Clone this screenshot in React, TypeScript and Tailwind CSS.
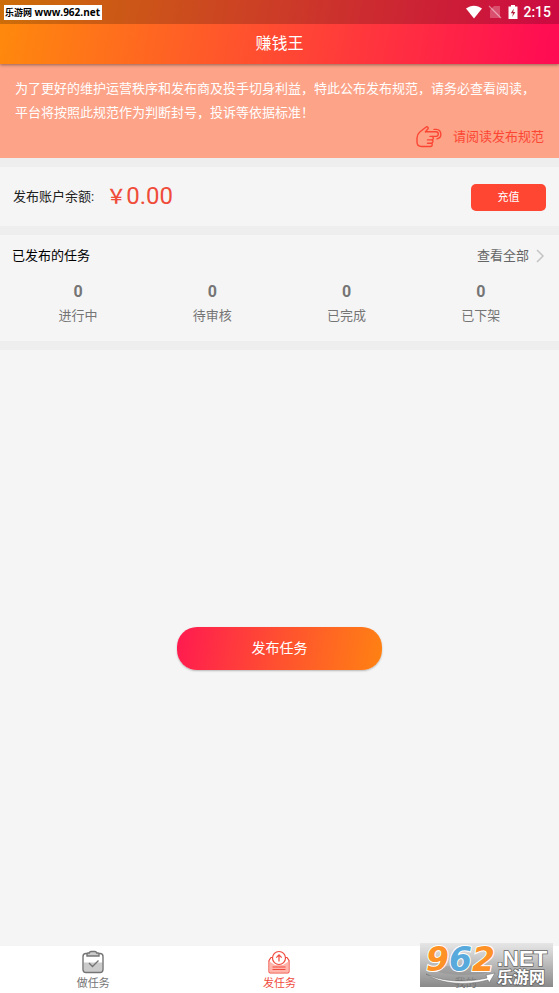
import type { ReactNode } from "react";

// ─────────────────────────────────────────────────────────────
// Publisher home screen: notice, balance, published task counters,
// publish button and the bottom tab bar.
// ─────────────────────────────────────────────────────────────

const STATS = [
  { label: "进行中", count: 0 },
  { label: "待审核", count: 0 },
  { label: "已完成", count: 0 },
  { label: "已下架", count: 0 },
];

function StatusBar() {
  return (
    <div className="flex h-6 items-center justify-between bg-black/20 pr-2 pl-1 text-white">
      <span className="bg-white pr-0.5 pl-px font-['Open_Sans','Noto_Sans_CJK_SC',sans-serif] text-[10px] leading-[14px] font-bold text-black">
        <span className="text-[9px]">乐游网</span> www.962.net
      </span>
      <div className="flex items-center">
        <svg className="mr-1 h-4 w-[18px]" viewBox="0 0 18 16" fill="currentColor" aria-hidden="true">
          <path d="M1 4.6C5.6.7 12.4.7 17 4.6L9 14.5Z" />
        </svg>
        <svg className="mr-1 h-4 w-4" viewBox="0 0 16 16" aria-hidden="true">
          <path d="M7 2h6v12H3V6Z" fill="currentColor" opacity=".25" />
          <path d="m2 2 12 12" stroke="currentColor" strokeWidth="1.3" opacity=".45" />
        </svg>
        <svg className="mr-1 h-4 w-3" viewBox="0 0 12 16" aria-hidden="true">
          <path d="M4 1h4v1.5h2.5V15h-9V2.5H4Z" fill="currentColor" />
          <path d="M6.8 4.5 3.8 9.3H6L5.2 13l3.1-4.9H6.2Z" fill="#b21f3c" />
        </svg>
        <span className="font-[Roboto,sans-serif] text-sm font-medium">2:15</span>
      </div>
    </div>
  );
}

function PointingHand() {
  return (
    <svg
      className="h-6 w-7"
      viewBox="0 0 28 24"
      fill="none"
      stroke="currentColor"
      strokeWidth="1.4"
      strokeLinecap="round"
      strokeLinejoin="round"
      aria-hidden="true"
    >
      <path d="M10.5 6.8h10.5a2.3 2.3 0 0 1 0 4.6H15" />
      <path d="M19 4.4h2.2a4.8 4.8 0 0 1 .8 9.5" />
      <path d="M10.5 6.8 13 3.8c.8-1.5-.8-2.6-2.2-1.6L4.8 7C2.8 8.7 2 10.5 2 13v4c0 3 1.8 4.5 4.5 4.5h9c2 0 2.3-2.6.8-3.3 1.9-.1 2.3-2.7.7-3.3 1.7-.4 1.8-2.9.2-3.5" />
      <path d="M12.5 14.9H17M12.5 18.2h3.8" />
    </svg>
  );
}

function ClipboardIcon() {
  return (
    <svg className="h-6 w-6" viewBox="0 0 24 24" fill="none" stroke="currentColor" strokeWidth="1.4" aria-hidden="true">
      <path d="M2.5 12.5h19V19a3 3 0 0 1-3 3h-13a3 3 0 0 1-3-3Z" fill="#cbcbcb" stroke="none" />
      <rect x="2" y="3.5" width="20" height="19" rx="3" />
      <path d="M6 6V4.2c0-.9.5-1.2 1.3-1.2h1c.3-1 .8-1.5 1.7-1.5h4c.9 0 1.4.5 1.7 1.5h1c.8 0 1.3.3 1.3 1.2V6Z" fill="#cbcbcb" />
      <path d="m8 13 3.5 3.5 6-6" />
    </svg>
  );
}

function UploadTrayIcon() {
  return (
    <svg className="h-6 w-6" viewBox="0 0 24 24" fill="none" stroke="currentColor" strokeWidth="1.2" aria-hidden="true">
      <path d="M6 7.5H4L2 10.5v11c0 .8.5 1.3 1.3 1.3h17.4c.8 0 1.3-.5 1.3-1.3v-11l-2-3h-2" fill="#fff" />
      <path d="M2.5 11.5 8 15h8l5.5-3.5v11h-19Z" fill="#ffb5ab" stroke="none" />
      <circle cx="12" cy="8" r="6.5" fill="#fff" />
      <path d="M12 11.5V5M9.3 7.6 12 4.9l2.7 2.7M5.5 17h13M5.5 19.5h13" />
    </svg>
  );
}

// Site badge that floats over the right end of the tab bar
function Watermark() {
  return (
    <svg
      className="absolute right-[6px] bottom-[6px] h-11 w-[133px] overflow-visible"
      viewBox="0 0 133 44"
      role="img"
      aria-label="962.NET 乐游网"
    >
      <defs>
        <linearGradient id="plate" x1="0" y1="0" x2="0" y2="1">
          <stop offset="0" stopColor="#e2e2e2" />
          <stop offset="1" stopColor="#6c6c6c" />
        </linearGradient>
      </defs>
      <rect width="133" height="44" fill="url(#plate)" opacity=".8" />
      <ellipse cx="44" cy="27" rx="27" ry="5" fill="#777" opacity=".25" />
      <g
        fontFamily="DejaVu Sans, sans-serif"
        fontWeight="bold"
        fontStyle="italic"
        fontSize="33"
        stroke="#fff"
        strokeWidth="2"
        paintOrder="stroke"
      >
        <text x="6" y="28">
          <tspan fill="#ff9226">9</tspan>
          <tspan fill="#58a9dc">6</tspan>
          <tspan fill="#ff9226">2</tspan>
        </text>
      </g>
      <path d="M6 31c16 8 40 9 61 4l-1-3 9-2-6 10-1-3C46 43 20 41 6 31Z" fill="#fff" stroke="#666" strokeWidth=".5" />
      <g fill="#fff" stroke="#666" strokeWidth="1.5" paintOrder="stroke" fontWeight="bold">
        <text x="77" y="23" fontSize="22" fontFamily="Liberation Sans, sans-serif">.NET</text>
        <text x="77" y="40" fontSize="16" fontFamily="Noto Sans CJK SC, sans-serif">乐游网</text>
      </g>
    </svg>
  );
}

function Tab({ label, icon, active }: { label: string; icon?: ReactNode; active?: boolean }) {
  return (
    <a
      href="#"
      aria-current={active ? "page" : undefined}
      className={`flex flex-1 flex-col items-center justify-end gap-0.5 pt-1 pb-px text-[11px] leading-4 ${active ? "text-[#f04a3c]" : "text-[#757575]"}`}
    >
      {icon}
      {label}
    </a>
  );
}

export default function App() {
  return (
    <div className="flex min-h-screen flex-col bg-[#f5f5f5] font-[Roboto,'Noto_Sans_CJK_SC',sans-serif] text-[13px] text-[#757575]">
      <header className="relative bg-linear-[100deg,#ff8a0c,#ff4a32_50%,#ff0a54] shadow-[0_1px_3px_rgba(0,0,0,0.4)]">
        <StatusBar />
        <h1 className="py-2 text-center text-base leading-6 text-white">赚钱王</h1>
      </header>

      <section className="bg-[#fca388] px-[15px] pt-[13px] pb-[9px] text-white">
        <p className="leading-6">
          为了更好的维护运营秩序和发布商及投手切身利益，特此公布发布规范，请务必查看阅读，平台将按照此规范作为判断封号，投诉等依据标准！
        </p>
        <a href="#" className="flex items-center justify-end gap-2.5 leading-6 text-[#fc4634]">
          <PointingHand />
          请阅读发布规范
        </a>
      </section>

      <main className="flex flex-1 flex-col">
        <section className="flex items-center border-y-9 border-[#eeeeee] px-[13px] pt-4 pb-[15px]">
          <span className="text-[#212121]">发布账户余额:</span>
          <span className="ml-3 text-2xl leading-[27px] text-[#f04c3a]">
            <span className="text-xl leading-[27px] font-medium">￥</span>0.00
          </span>
          <button type="button" className="ml-auto h-[27px] w-[75px] rounded-[5px] bg-[#ff4633] pt-0.5 text-[11px] text-white">
            充值
          </button>
        </section>

        <section className="border-b-9 border-[#eeeeee] pt-[11px] pb-[13px]">
          <div className="flex items-center justify-between px-3 leading-5">
            <h2 className="text-black">已发布的任务</h2>
            <a href="#" className="flex items-center gap-1.5 text-[#666]">
              查看全部
              <svg className="h-4 w-3" viewBox="0 0 12 16" fill="none" stroke="#c4c4c4" strokeWidth="1.5" aria-hidden="true">
                <path d="m2 2 6 6-6 6" />
              </svg>
            </a>
          </div>
          <ul className="mt-3.5 flex px-[11px] text-center">
            {STATS.map((s) => (
              <li key={s.label} className="flex-1">
                <p className="text-base leading-6 font-bold">{s.count}</p>
                <p className="leading-6">{s.label}</p>
              </li>
            ))}
          </ul>
        </section>

        <div className="flex flex-1 items-center justify-center">
          <button
            type="button"
            className="h-[43px] w-[205px] rounded-[20px] bg-linear-[100deg,#ff1a50,#ff5030_50%,#ff8212] text-sm text-white shadow-[0_1px_2px_rgba(0,0,0,0.25)]"
          >
            发布任务
          </button>
        </div>
      </main>

      <nav className="relative flex bg-white">
        <Tab label="做任务" icon={<ClipboardIcon />} />
        <Tab label="发任务" icon={<UploadTrayIcon />} active />
        <Tab label="我的" />
        <Watermark />
      </nav>
    </div>
  );
}
